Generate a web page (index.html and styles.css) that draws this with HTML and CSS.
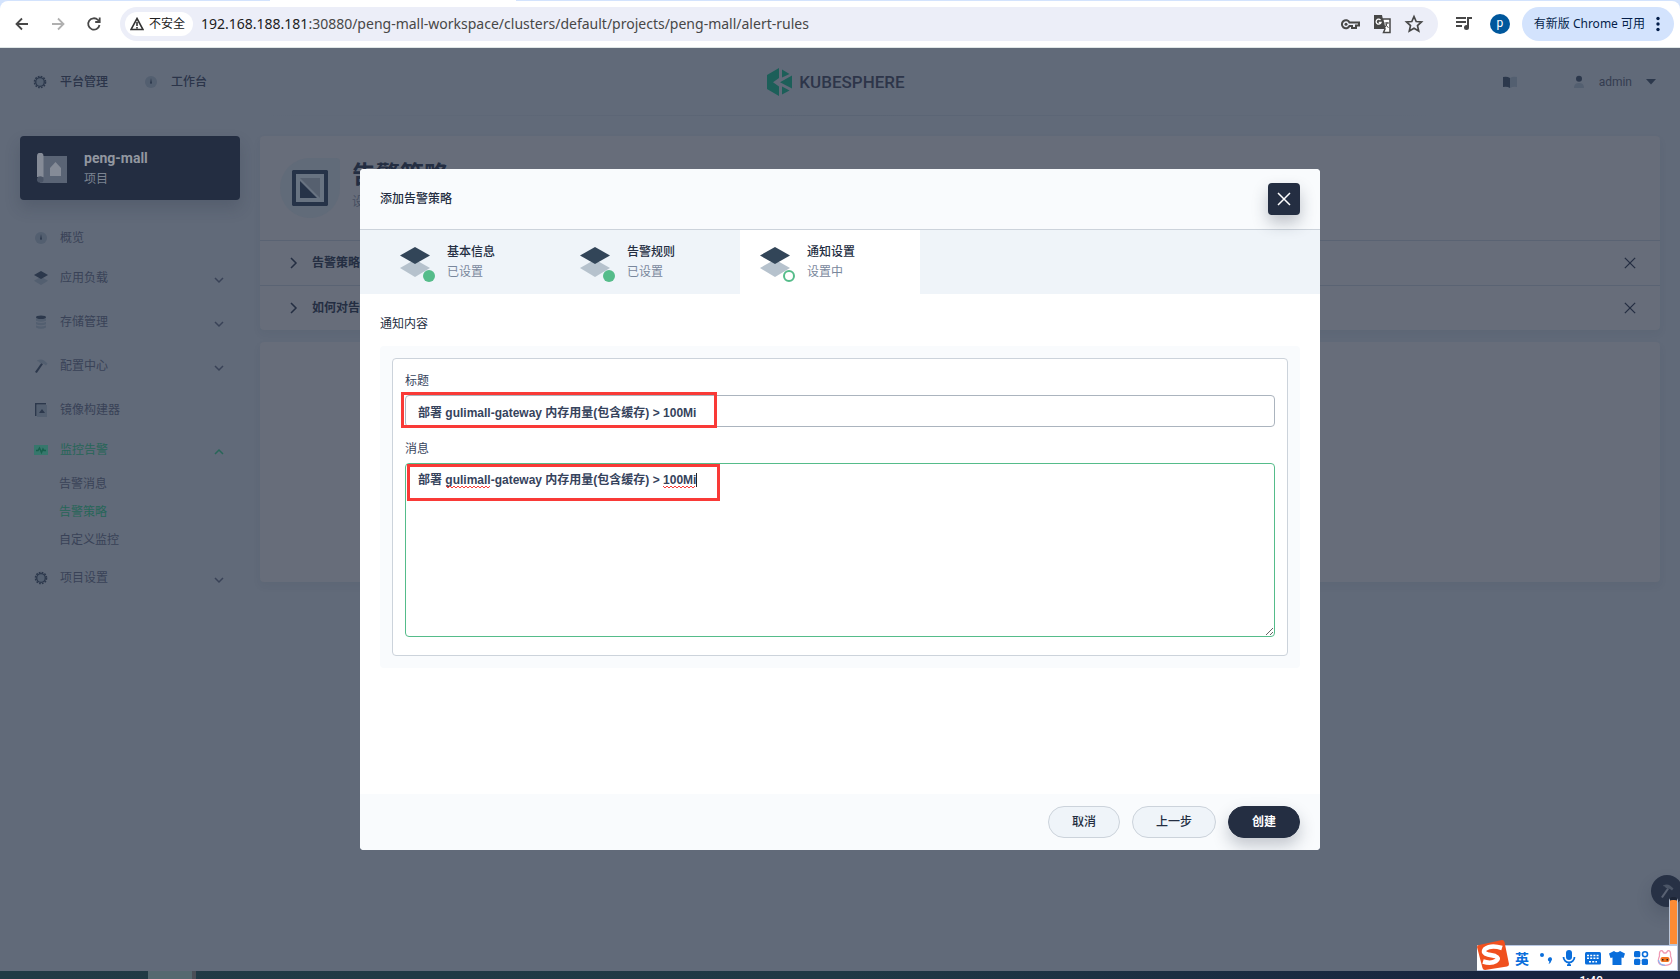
FILE: index.html
```
<!DOCTYPE html>
<html lang="zh">
<head>
<meta charset="utf-8">
<title>告警策略</title>
<link rel="stylesheet" href="styles.css">
</head>
<body>
<svg class="sprite" aria-hidden="true">
  <symbol id="layers" viewBox="0 0 30 30"><path class="lo" d="M0 21 15 12.500 30 21 15 30z"/><path class="hi" d="M0 8.500 15 0 30 8.500 15 17z"/></symbol>
  <symbol id="gear" viewBox="0 0 14 14"><circle class="lo" cx="7" cy="7" r="4"/><circle class="hs" cx="7" cy="7" r="5.500" stroke-width="1.600" stroke-dasharray="1.730 1.150"/><circle class="hs" cx="7" cy="7" r="4.300" stroke-width="1.300"/></symbol>
  <symbol id="dash" viewBox="0 0 14 14"><circle class="lo" cx="7" cy="7" r="6"/><path class="hi" d="M7 3 7.800 7.200a1 1 0 1 1-1.600 0z"/></symbol>
  <symbol id="db" viewBox="0 0 14 14"><path class="lo" d="M2 3.500h10v2.300q-5 2-10 0zM2 7q5 2 10 0v2.300q-5 2-10 0zM2 10.500q5 2 10 0v2q-5 2.500-10 0z"/><ellipse class="hi" cx="7" cy="2.200" rx="5" ry="1.800"/></symbol>
  <symbol id="hammer" viewBox="0 0 14 14"><path class="hi" d="M7.300 4 1 13l1.800 1L9 5z"/><path class="lo" d="M3 1.500Q7-.5 10 1.500l3.500 3-1.500 2-2-1.500L6 4Q5 2 3 2z"/></symbol>
  <symbol id="image" viewBox="0 0 14 14"><path class="lo" d="M3 2h10v12H3z"/><path class="hi" d="M1 0h11v1.500H2.500V13H1zM5 10l3-4 3 4z"/></symbol>
  <symbol id="monitor" viewBox="0 0 14 14"><path class="lo" d="M0 2h14v10H0z"/><path class="hs" d="M2 7.500h2L5.500 5l2 4.500L9 6l1 1.500h2" stroke-width="1.400"/></symbol>
  <symbol id="down" viewBox="0 0 10 10"><path class="ln" d="m1 3 4 4 4-4"/></symbol>
  <symbol id="up" viewBox="0 0 10 10"><path class="ln" d="m1 7 4-4 4 4"/></symbol>
  <symbol id="right" viewBox="0 0 12 12"><path class="ln" d="m4 1 5 5-5 5"/></symbol>
  <symbol id="cross" viewBox="0 0 14 14"><path class="ln" d="m1 1 12 12M13 1 1 13"/></symbol>
</svg>

<div class="browser">
  <div class="tabstrip"><span class="tab"></span></div>
  <div class="toolbar">
    <button class="tool" aria-label="后退"><svg viewBox="0 0 16 16"><path d="M14 8H3M8 2.500 2.500 8 8 13.500"/></svg></button>
    <button class="tool off" aria-label="前进"><svg viewBox="0 0 16 16"><path d="M2 8h11M8 2.500 13.500 8 8 13.500"/></svg></button>
    <button class="tool" aria-label="重新加载"><svg viewBox="0 0 16 16"><path d="M13.500 9A5.700 5.700 0 1 1 12 4l1.500 1.500M13.700 1.500v4.500H9.200"/></svg></button>
    <div class="omnibox">
      <button class="chip"><svg viewBox="0 0 14 14"><path d="M7 1.500 13 12.500H1zM7 5v4M7 10v1.500"/></svg>不安全</button>
      <span class="url"><b>192.168.188.181</b>:30880/peng-mall-workspace/clusters/default/projects/peng-mall/alert-rules</span>
      <svg class="act" viewBox="0 0 20 20"><g fill="none" stroke="#474747" stroke-width="2"><path d="M9.500 8.500A4 4 0 1 0 9.500 12H12v2h4v-2.500h3v-3z"/></g><circle cx="6" cy="10.300" r="1.500" fill="#474747"/></svg>
      <svg class="act" viewBox="0 0 20 20"><path fill="#474747" d="M2 1h8l3 14H2z"/><path fill="#fff" stroke="#474747" stroke-width="1.500" d="M10.500 5H18v13.500h-6.500L13 15z"/><path d="M8.500 6A2.500 2.500 0 1 0 9 8.500H6.800" fill="none" stroke="#fff" stroke-width="1.300"/><path d="M12.500 9H17M15 8v1q-.5 3-2 4M13.500 10.500q1 2 3 3" fill="none" stroke="#474747"/></svg>
      <svg class="act" viewBox="0 0 20 20"><path d="m10 2.500 2.200 5 5.300.5-4 3.600 1.200 5.400L10 14.200 5.300 17l1.200-5.400-4-3.600 5.300-.5z" fill="none" stroke="#474747" stroke-width="1.700"/></svg>
    </div>
    <svg class="act music" viewBox="0 0 20 20"><path d="M2 4h10M2 8h10M2 12h6" stroke="#474747" stroke-width="2"/><path d="M14 13V4h4" fill="none" stroke="#474747" stroke-width="2"/><circle cx="12.500" cy="13.500" r="2.500" fill="#474747"/></svg>
    <span class="avatar">p</span>
    <button class="update">有新版 Chrome 可用<svg viewBox="0 0 4 16"><circle cx="2" cy="2.500" r="1.700"/><circle cx="2" cy="8" r="1.700"/><circle cx="2" cy="13.500" r="1.700"/></svg></button>
  </div>
</div>

<div class="page">
  <header class="top">
    <nav class="topnav">
      <a href="#"><svg class="ic"><use href="#gear"/></svg>平台管理</a>
      <a href="#"><svg class="ic"><use href="#dash"/></svg>工作台</a>
    </nav>
    <div class="logo">
      <svg viewBox="0 0 25 28"><path d="M12 0v10L6 14.300l6 4.200V28L0 21V7zM15 1.500 22.500 6 15 9.500zM25 7.500v13L13 14.300zM15 18.500l7.500 4L15 26.500z"/></svg>KUBESPHERE
    </div>
    <div class="account">
      <svg class="book" viewBox="0 0 14 12"><path class="hi" d="M0 1q4-1 7 1v10q-3-2-7-1z"/><path class="lo" d="M14 1q-4-1-7 1v10q3-2 7-1z"/></svg>
      <svg class="person" viewBox="0 0 12 14"><path class="lo" d="M1 13q0-5 5-5t5 5z"/><circle class="hi" cx="6" cy="3.800" r="3"/></svg>
      <span>admin</span>
      <svg class="caret" viewBox="0 0 10 6"><path class="hi" d="M0 0h10L5 5.500z"/></svg>
    </div>
  </header>

  <div class="columns">
    <aside class="side">
      <div class="project">
        <svg viewBox="0 0 30 30"><path fill="#5a6475" d="M6 3h24v27H3V24h3z"/><path fill="#858b97" d="M0 3a3.200 3.200 0 0 1 6.500 0v21H0z"/><circle cx="3.200" cy="26.500" r="3.300" fill="#4a5466"/><path fill="#858b97" d="m18.500 9 5.500 6v8H13v-8z"/></svg>
        <div><strong>peng-mall</strong><p>项目</p></div>
      </div>
      <ul class="menu">
        <li><a href="#"><svg class="ic"><use href="#dash"/></svg>概览</a></li>
        <li class="more"><a href="#"><svg class="ic"><use href="#layers"/></svg>应用负载<svg class="chev"><use href="#down"/></svg></a></li>
        <li class="more"><a href="#"><svg class="ic"><use href="#db"/></svg>存储管理<svg class="chev"><use href="#down"/></svg></a></li>
        <li class="more"><a href="#"><svg class="ic"><use href="#hammer"/></svg>配置中心<svg class="chev"><use href="#down"/></svg></a></li>
        <li><a href="#"><svg class="ic"><use href="#image"/></svg>镜像构建器</a></li>
        <li class="more"><a href="#" class="on"><svg class="ic"><use href="#monitor"/></svg>监控告警<svg class="chev"><use href="#up"/></svg></a>
          <ul class="sub"><li><a href="#">告警消息</a></li><li><a href="#" class="on">告警策略</a></li><li><a href="#">自定义监控</a></li></ul>
        </li>
        <li class="more"><a href="#"><svg class="ic"><use href="#gear"/></svg>项目设置<svg class="chev"><use href="#down"/></svg></a></li>
      </ul>
    </aside>
    <main class="content">
      <section class="card">
        <div class="banner">
          <span class="badge"><svg viewBox="0 0 36 36"><path fill="#263348" d="M1 0h34l1 1v34l-1 1H1l-1-1V1z"/><path fill="#687381" d="M4 4h28v28H4z"/><path fill="#56606f" d="M8 8h20v20z"/><path fill="#263348" d="M8 11v17h17z"/></svg></span>
          <div><h1>告警策略</h1><p>设置</p></div>
        </div>
        <div class="tip"><svg class="arrow"><use href="#right"/></svg><span>告警策略</span><button aria-label="关闭"><svg><use href="#cross"/></svg></button></div>
        <div class="tip"><svg class="arrow"><use href="#right"/></svg><span>如何对告警</span><button aria-label="关闭"><svg><use href="#cross"/></svg></button></div>
      </section>
      <section class="card empty"></section>
    </main>
  </div>

  <div class="overlay">
    <form class="modal" role="dialog" aria-label="添加告警策略">
      <div class="modal-head"><h2>添加告警策略</h2><button type="button" class="close" aria-label="关闭"><svg><use href="#cross"/></svg></button></div>
      <div class="steps">
        <div class="step"><span class="stepicon"><svg><use href="#layers"/></svg><i class="dot"></i></span><div><strong>基本信息</strong><p>已设置</p></div></div>
        <div class="step"><span class="stepicon"><svg><use href="#layers"/></svg><i class="dot"></i></span><div><strong>告警规则</strong><p>已设置</p></div></div>
        <div class="step current"><span class="stepicon"><svg><use href="#layers"/></svg><i class="dot ring"></i></span><div><strong>通知设置</strong><p>设置中</p></div></div>
      </div>
      <div class="modal-body">
        <h3>通知内容</h3>
        <div class="well">
          <div class="fields">
            <label for="title">标题</label>
            <div class="field"><input id="title" type="text" value="部署 gulimall-gateway 内存用量(包含缓存) &gt; 100Mi"><span class="mark mark-title"></span></div>
            <label for="message">消息</label>
            <div class="field"><textarea id="message" spellcheck="false">部署 gulimall-gateway 内存用量(包含缓存) &gt; 100Mi</textarea><svg class="wave wave-a"><path d="m0 1 2 2 2-2 2 2 2-2 2 2 2-2 2 2 2-2 2 2 2-2 2 2 2-2 2 2 2-2 2 2 2-2 2 2 2-2 2 2 2-2 2 2 2-2"/></svg><svg class="wave wave-b"><path d="m0 1 2 2 2-2 2 2 2-2 2 2 2-2 2 2 2-2 2 2 2-2 2 2 2-2 2 2 2-2 2 2 2-2"/></svg><span class="cursor"></span><span class="mark mark-message"></span></div>
          </div>
        </div>
      </div>
      <div class="modal-foot"><button type="button">取消</button><button type="button">上一步</button><button type="button" class="primary">创建</button></div>
    </form>
  </div>
  <button class="float" aria-label="工具箱"><svg viewBox="0 0 14 14"><use href="#hammer"/></svg></button>
</div>

<div class="taskbar"><span class="task"></span><span class="clock">1:49</span></div>
<div class="gauge"></div>
<div class="ime">
  <svg class="sogou" viewBox="0 0 32 32"><path fill="#f0501e" d="M2 5 25 0q2 0 2.500 2L32 24q0 2-2 2.500L8 30q-2 0-2.500-2L0 7q0-2 2-2z"/><path d="M25 8Q14 4.500 8 9q-3 4 3 5.500l7 1.500q5 2 1 5-5 3-13 .5" fill="none" stroke="#fff" stroke-width="4.500"/></svg>
  <span class="lang">英</span>
  <svg viewBox="0 0 16 16"><circle cx="5" cy="5" r="2"/><path d="M11 9a2 2 0 1 1 3.500 1.500Q14 13 11.500 14q1-1.500.8-2.500A2 2 0 0 1 11 9z"/></svg>
  <svg viewBox="0 0 16 16"><rect x="5" width="6" height="10" rx="3"/><path d="M2.500 7a5.500 5.500 0 0 0 11 0M8 12.500V16" fill="none" stroke="#0a6edb" stroke-width="1.800"/><path d="M6 14.300h4V16H6z"/></svg>
  <svg viewBox="0 0 16 16"><rect y="2" width="16" height="12.500" rx="1.500"/><path d="M2 5.500h12M2 8.300h12M4 11.700h8" stroke="#fff" stroke-width="1.600" stroke-dasharray="2 1.200"/></svg>
  <svg viewBox="0 0 16 16"><path d="M5 1q3 2.500 6 0l5 2.500-1.500 4.500-2-.5V15h-9V7.500l-2 .5L0 3.500z"/></svg>
  <svg viewBox="0 0 16 16"><rect x="1" y="1" width="6.300" height="6.300" rx="1.500"/><circle cx="12" cy="4.200" r="2.500" fill="none" stroke="#0a6edb" stroke-width="1.600"/><rect x="1" y="8.700" width="6.300" height="6.300" rx="1.500"/><rect x="8.700" y="8.700" width="6.300" height="6.300" rx="1.500"/></svg>
  <svg viewBox="0 0 16 16"><path d="M2.500 6Q2 0 5 .7L7 3h2l2-2.300q3-.7 2.500 5.300 4 9-5.500 9.300Q-1.500 15 2.500 6z" fill="#fff" stroke="#ef9bb4" stroke-width="1.300"/><path d="M1.500 10q.5 5 6.500 5.300" fill="none" stroke="#8db4f5" stroke-width="1.300"/><rect x="3.500" y="7" width="9" height="5" rx="2" fill="#f27421"/><path d="M5 9h1.500v1.500H5zM9.500 9H11v1.500H9.500z" fill="#222"/></svg>
</div>
</body>
</html>
```
FILE: styles.css
```
* { box-sizing: border-box; margin: 0; padding: 0; }
body {
  height: 100vh; display: flex; flex-direction: column; overflow: hidden; position: relative;
  font: 12px/20px Roboto, "Noto Sans CJK SC", sans-serif; color: #242e42; background: #616a79;
}
button, input, textarea { font: inherit; color: inherit; border: 0; background: none; }
a { color: inherit; text-decoration: none; }
ul { list-style: none; }
.sprite { position: absolute; width: 0; height: 0; }
.hi { fill: var(--hi); }
.lo { fill: var(--lo); }
.hs { fill: none; stroke: var(--hi); }
.ln { fill: none; stroke: currentColor; stroke-width: 1.5; }

/* browser chrome */
.browser { background: #d3e3fd; border-bottom: 1px solid #dfe6e6; flex: none; }
.tabstrip { height: 1px; padding-left: 270px; }
.tab { display: block; width: 246px; height: 1px; background: #fff; }
.toolbar { height: 46px; background: #fff; border-radius: 8px 8px 0 0; display: flex; align-items: center; padding: 0 6px 0 12px; }
.tool { width: 20px; height: 20px; margin-right: 16px; display: grid; place-items: center; }
.tool svg { width: 16px; height: 16px; fill: none; stroke: #474747; stroke-width: 1.8; }
.tool.off svg { stroke: #b0b0b0; }
.omnibox { flex: 1; height: 34px; border-radius: 17px; background: #eceef8; display: flex; align-items: center; gap: 12px; padding: 0 14px 0 5px; }
.chip { height: 24px; border-radius: 12px; background: #fff; padding: 0 8px 0 5px; display: flex; align-items: center; gap: 5px; color: #202020; }
.chip svg { width: 14px; height: 14px; fill: none; stroke: #333; stroke-width: 1.6; }
.url { flex: 1; margin-left: -4px; font: 14px/20px "Noto Sans", "Open Sans", sans-serif; color: #474747; white-space: nowrap; }
.url b { font-weight: 400; color: #202020; }
.act { width: 20px; height: 20px; flex: none; }
.music { margin: 0 16px; }
.avatar { width: 20px; height: 20px; border-radius: 50%; background: #00579c; color: #fff; text-align: center; line-height: 18px; }
.update { height: 34px; margin-left: 12px; padding: 0 14px 0 12px; border-radius: 17px; background: #d3e3fd; color: #041e49; display: flex; align-items: center; gap: 11px; font-family: "Noto Sans", "Noto Sans CJK SC", sans-serif; white-space: nowrap; }
.update svg { width: 4px; height: 16px; fill: #041e49; }

/* dimmed console */
.page { flex: 1; position: relative; overflow: hidden; --hi: #2c384c; --lo: #535f70; }
.top { height: 68px; display: grid; grid-template-columns: 1fr auto 1fr; align-items: center; padding: 0 32px 0 24px; border-bottom: 1px solid transparent; border-image: linear-gradient(90deg, transparent 14%, #5a6474 50%, transparent 87%) 1; color: #2b3449; }
.topnav { display: flex; gap: 36px; padding-left: 9px; }
.topnav a { display: flex; align-items: center; gap: 13px; font-weight: 500; }
.ic { width: 14px; height: 14px; flex: none; }
.logo { display: flex; align-items: center; gap: 7px; font: 500 17px/28px Roboto, sans-serif; color: #2d3549; }
.logo svg { width: 25px; height: 28px; fill: #1c5f59; }
.account { display: flex; align-items: center; justify-content: flex-end; margin-right: -8px; color: #343c50; }
.book { width: 14px; height: 12px; margin-right: 56px; }
.person { width: 12px; height: 14px; margin-right: 14px; }
.caret { width: 10px; height: 6px; margin-left: 14px; }
.columns { display: grid; grid-template-columns: 220px 1fr; gap: 20px; padding: 20px; }
.project { height: 64px; padding: 0 17px; display: flex; align-items: center; gap: 17px; border-radius: 4px; background: #232d41; color: #7c8492; box-shadow: 0 8px 16px rgba(36, 46, 66, .2); }
.project svg { width: 30px; height: 30px; }
.project strong { font-size: 14px; color: #9297a0; }
.menu { padding: 18px 14px 0; color: #394257; }
.menu a { display: flex; align-items: center; height: 40px; gap: 12px; }
.chev { width: 10px; height: 10px; margin: 4px 2px 0 auto; }
.more { margin-bottom: 4px; }
.menu .on { color: #276658; --hi: #17604c; --lo: #36776c; }
.sub { padding-left: 25px; }
.sub a { height: 28px; }
.card { background: #676d7a; border-radius: 4px; box-shadow: 0 4px 8px rgba(36, 46, 66, .06); }
.banner { height: 104px; display: flex; padding: 22px 20px; gap: 12px; }
.badge { width: 60px; height: 60px; border-radius: 30px 4px 30px 30px; background: #616b79; display: grid; place-items: center; }
.badge svg { width: 36px; height: 36px; }
.banner h1 { font-size: 24px; line-height: 34px; }
.banner p { color: #454e61; }
.tip { height: 45px; display: flex; align-items: center; border-top: 1px solid #5a6373; padding: 0 24px 0 27px; font-weight: 700; }
.tip span { flex: 1; margin-left: 13px; }
.arrow { width: 12px; height: 12px; }
.tip button { width: 12px; height: 12px; display: flex; }
.tip button svg { width: 12px; height: 12px; }
.empty { height: 240px; margin-top: 12px; }

/* dialog */
.overlay { position: absolute; inset: 0; display: flex; justify-content: center; align-items: flex-start; padding-top: 121px; }
.modal { width: 960px; max-width: 100%; background: #fff; border-radius: 4px; overflow: hidden; --hi: #324558; --lo: #b6c2cd; }
.modal-head { height: 61px; background: #f9fbfd; border-bottom: 1px solid #ccd3db; display: flex; align-items: center; justify-content: space-between; padding: 0 20px; }
.modal h2, .step strong { font-size: 12px; font-weight: 500; line-height: 20px; }
.close { width: 32px; height: 32px; border-radius: 4px; background: #242e42; color: #fff; display: grid; place-items: center; box-shadow: 0 8px 16px rgba(36, 46, 66, .28); }
.close svg { width: 14px; height: 14px; }
.steps { height: 64px; background: #eff4f9; display: flex; padding-left: 20px; }
.step { width: 180px; padding: 12px 20px; display: flex; gap: 17px; }
.step p { color: #79879c; }
.current { background: #fff; }
.stepicon { position: relative; width: 30px; height: 30px; margin-top: 5px; }
.stepicon svg { width: 30px; height: 30px; }
.dot { position: absolute; left: 23px; top: 23px; width: 12px; height: 12px; border-radius: 50%; background: #55bc8a; }
.ring { background: #fff; border: 2px solid #55bc8a; }
.modal-body { padding: 20px 20px 0; min-height: 500px; }
.modal h3 { font-size: 12px; font-weight: 400; line-height: 20px; margin-bottom: 12px; }
.well { background: #f9fbfd; border-radius: 4px; padding: 12px; }
.fields { background: #fff; border: 1px solid #ccd3db; border-radius: 4px; padding: 12px 12px 18px; }
.fields label { display: block; margin-bottom: 4px; color: #36435c; }
.field { position: relative; font: 700 12px/20px "Liberation Sans", "Noto Sans CJK SC", sans-serif; color: #36435c; }
.field input, .field textarea { display: block; width: 100%; border: 1px solid #abb4be; border-radius: 4px; background: #fff; padding: 5px 12px; }
.field input { height: 32px; margin-bottom: 12px; }
.field textarea { height: 174px; padding-top: 6px; border-color: #55bc8a; outline: 0; resize: vertical; }
.mark { position: absolute; border: 3px solid #f93a37; pointer-events: none; }
.mark-title { left: -4px; top: -3px; width: 316px; height: 36px; }
.mark-message { left: 2px; top: 1px; width: 313px; height: 37px; }
.wave { position: absolute; top: 22px; height: 4px; fill: none; stroke: #f93a37; stroke-width: 1; }
.wave-a { left: 41px; width: 44px; }
.wave-b { left: 258px; width: 33px; }
.cursor { position: absolute; left: 291px; top: 10px; width: 1px; height: 14px; background: #222; }
.modal-foot { background: #f9fbfd; display: flex; justify-content: flex-end; gap: 12px; padding: 12px 20px; }
.modal-foot button { height: 32px; padding: 0 23px; border: 1px solid #ccd3db; border-radius: 16px; background: #eff4f9; font-weight: 500; }
.modal-foot .primary { background: #242e42; border-color: #242e42; color: #fff; font-weight: 700; box-shadow: 0 8px 16px rgba(36, 46, 66, .25); }

/* desktop overlays */
.float { position: absolute; right: -3px; bottom: 64px; width: 32px; height: 32px; border-radius: 50%; background: #273145; display: grid; place-items: center; box-shadow: 0 8px 16px rgba(36, 46, 66, .2); --hi: #596273; --lo: #4b5566; }
.float svg { width: 14px; height: 14px; }
.taskbar { flex: none; height: 8px; overflow: hidden; display: flex; justify-content: space-between; background: linear-gradient(90deg, #213b45, #1f3945 50%, #17243f 90%); padding: 0 77px 0 148px; }
.task { width: 48px; background: #556970; border-right: 4px solid #4a4f57; }
.clock { color: #fff; font-weight: 500; line-height: 20px; }
.gauge { position: absolute; right: 2px; bottom: 34px; width: 9px; height: 48px; border: 1px solid #b9c4d6; border-top: 3px solid #1d2536; border-radius: 4px 4px 0 0; background: #fd8b34; }
.ime { position: absolute; right: 2px; bottom: 8px; height: 26px; display: flex; align-items: center; gap: 8px; padding-right: 4px; background: #fff; border: 1px solid #b9c8e4; border-left: 0; }
.ime svg { width: 16px; height: 16px; fill: #0a6edb; }
.ime .sogou { width: 32px; height: 32px; margin: 0 -2px 4px 0; }
.ime .lang { font: 700 14px/20px "Noto Sans CJK SC", sans-serif; color: #0a6edb; }
```
